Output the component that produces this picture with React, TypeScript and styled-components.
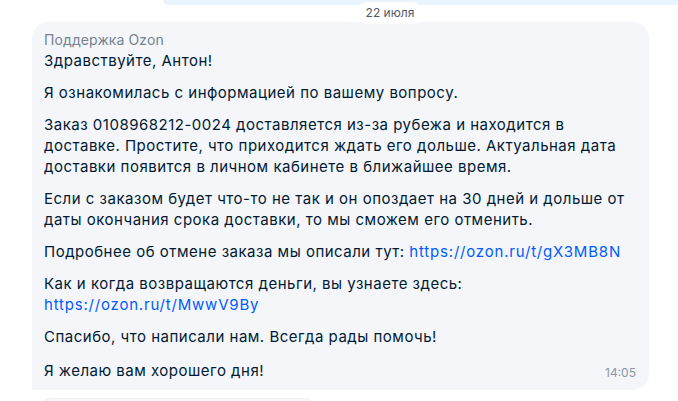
import React from "react";
import styled, { createGlobalStyle } from "styled-components";

const Global = createGlobalStyle`
  html, body { margin: 0; padding: 0; background: #ffffff; overflow: hidden; }
  body { font-family: Inter, "Noto Sans", "Liberation Sans", sans-serif; }
`;

const Chat = styled.div`
  width: 678px;
  height: 401px;
  overflow: hidden;
  display: flex;
  flex-direction: column;
`;

const OutgoingTail = styled.div`
  flex: none;
  margin-left: 163px;
  height: 5px;
  background: #e9f4ff;
  border-radius: 0 0 0 16px;
`;

const DateRow = styled.div`
  flex: none;
  display: flex;
  justify-content: center;
  padding-left: 102px;
  margin-top: -3px;
  position: relative;
`;

const DatePill = styled.div`
  background: #ffffff;
  border-radius: 8px;
  padding: 3px 7px 4px;
  font-size: 12px;
  line-height: 15px;
  color: #4d5a6a;
`;

const Bubble = styled.div<{ $width: number }>`
  flex: none;
  margin-left: 32px;
  margin-top: -2px;
  width: ${(p) => p.$width}px;
  box-sizing: border-box;
  background: #f4f6fa;
  border-radius: 16px 16px 16px 0;
  padding: 9px 12px 9px;
  color: #001a34;
`;

const Sender = styled.div`
  font-size: 14px;
  line-height: 18px;
  letter-spacing: 0.1px;
  color: #75838f;
  margin-bottom: 1px;
`;

const Paragraph = styled.p`
  margin: 0 0 11px;
  font-size: 15px;
  line-height: 21px;
  letter-spacing: 0.5px;
  white-space: nowrap;
  &:last-child { margin-bottom: 0; }
`;

const Link = styled.a`
  color: #005bff;
  text-decoration: none;
  letter-spacing: 0.8px;
`;

const LastRow = styled.div`
  display: flex;
  align-items: flex-end;
  justify-content: space-between;
  padding-top: 2px;
  & > ${Paragraph} { margin: 0; }
`;

const Time = styled.span`
  font-size: 12px;
  line-height: 16px;
  color: #8a97a6;
  margin-right: 1px;
`;

const NextBubble = styled.div`
  flex: none;
  margin-left: 38px;
  margin-top: 8px;
  width: 276px;
  height: 20px;
  background: #f4f6fa;
  border: 1px solid #eceff4;
  border-radius: 12px 12px 0 0;
`;

export default function App() {
  return (
    <>
      <Global />
      <Chat>
        <OutgoingTail />
        <DateRow>
          <DatePill>22 июля</DatePill>
        </DateRow>
        <Bubble $width={617}>
          <Sender>Поддержка Ozon</Sender>
          <Paragraph>Здравствуйте, Антон!</Paragraph>
          <Paragraph>Я ознакомилась с информацией по вашему вопросу.</Paragraph>
          <Paragraph>
            Заказ 0108968212-0024 доставляется из-за рубежа и находится в
            <br />
            доставке. Простите, что приходится ждать его дольше. Актуальная дата
            <br />
            доставки появится в личном кабинете в ближайшее время.
          </Paragraph>
          <Paragraph>
            Если с заказом будет что-то не так и он опоздает на 30 дней и дольше от
            <br />
            даты окончания срока доставки, то мы сможем его отменить.
          </Paragraph>
          <Paragraph>
            Подробнее об отмене заказа мы описали тут:{" "}
            <Link href="#">https://ozon.ru/t/gX3MB8N</Link>
          </Paragraph>
          <Paragraph>
            Как и когда возвращаются деньги, вы узнаете здесь:
            <br />
            <Link href="#">https://ozon.ru/t/MwwV9By</Link>
          </Paragraph>
          <Paragraph>Спасибо, что написали нам. Всегда рады помочь!</Paragraph>
          <LastRow>
            <Paragraph>Я желаю вам хорошего дня!</Paragraph>
            <Time>14:05</Time>
          </LastRow>
        </Bubble>
        <NextBubble />
      </Chat>
    </>
  );
}
